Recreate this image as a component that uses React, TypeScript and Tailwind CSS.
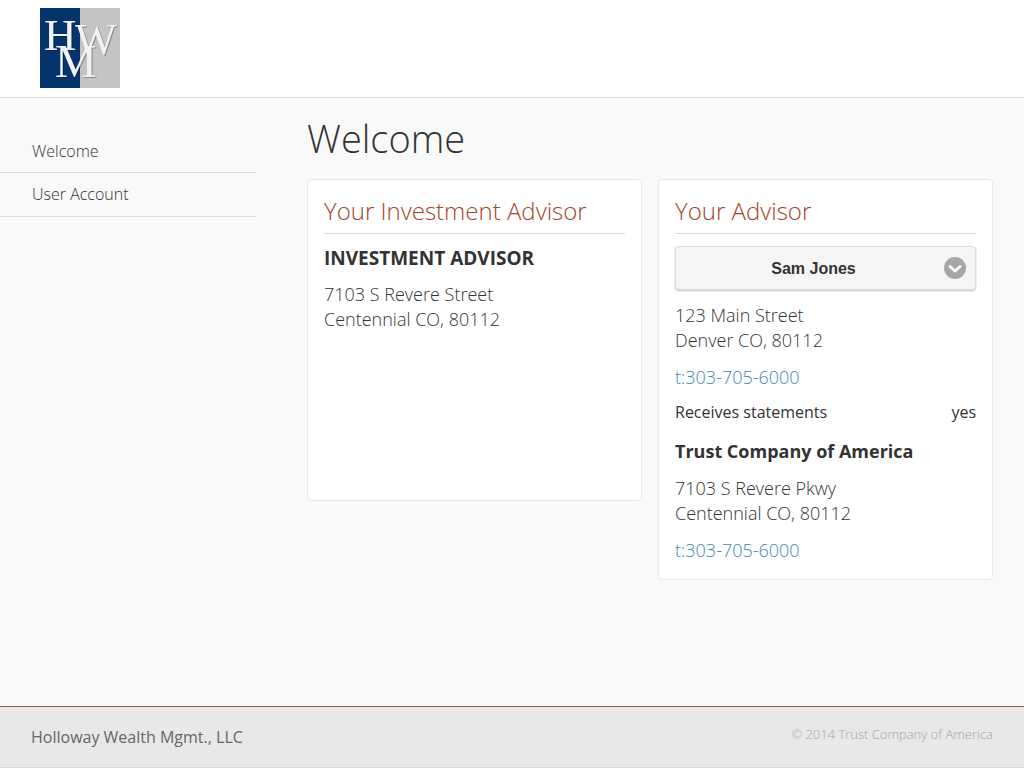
const OPEN_SANS = "font-['Open_Sans','Noto_Sans',sans-serif]";

function Logo() {
  return (
    <svg width="80" height="80" viewBox="0 0 80 80" className="block">
      <rect width="40" height="80" fill="#05336b" />
      <rect x="40" width="40" height="80" fill="#c3c4c6" />
      <g fontFamily="'Liberation Serif', serif" fill="#f1f2f4" className="drop-shadow-[1px_1px_0_rgba(0,0,0,0.3)]">
        <text x="35" y="46" fontSize="44">W</text>
        <text x="4" y="42" fontSize="45">H</text>
        <text x="15" y="69" fontSize="47">M</text>
      </g>
    </svg>
  );
}

function Chevron() {
  return (
    <svg width="22" height="22" viewBox="0 0 22 22" className="block">
      <circle cx="11" cy="11" r="11" fill="#a6a6a6" />
      <path d="M6 9.5l5 4.5 5-4.5" fill="none" stroke="#fff" strokeWidth="3" strokeLinecap="round" strokeLinejoin="round" />
    </svg>
  );
}

function CardTitle({ children }: { children: string }) {
  return (
    <h2 className="text-[24px] leading-[33px] font-light text-[#a5432a] border-b border-[#dcdcdc] pb-[6px]">
      {children}
    </h2>
  );
}

function Address({ lines, className }: { lines: string[]; className?: string }) {
  return (
    <p className={`text-[18px] leading-[25px] font-light text-[#333] ${className ?? ""}`}>
      {lines[0]}
      <br />
      {lines[1]}
    </p>
  );
}

export default function App() {
  return (
    <div className={`${OPEN_SANS} w-[1024px] h-[768px] flex flex-col bg-[#f9f9f9] overflow-hidden`}>
      <header className="h-[98px] shrink-0 bg-white border-b border-[#d9d9d9] pl-10 pt-2">
        <Logo />
      </header>

      <div className="flex-1 flex min-h-0">
        <nav className="w-[256px] shrink-0 pt-[32px] text-[16px] font-light text-[#333]">
          <div className="h-[43px] pl-8 flex items-center border-b border-[#dcdcdc]">Welcome</div>
          <div className="h-[44px] pl-8 pb-[2px] flex items-center border-b border-[#dcdcdc]">User Account</div>
        </nav>

        <main className="flex-1 pl-[51px] pr-[31px]">
          <h1 className="text-[38px] leading-[50px] font-light text-[#333] mt-[15px] mb-[16px]">Welcome</h1>
          <div className="flex items-start gap-4">
            <section className="w-[335px] h-[322px] bg-white border border-[#e8e8e8] rounded-[4px] px-4 pt-[14px]">
              <CardTitle>Your Investment Advisor</CardTitle>
              <h3 className="text-[19px] leading-[25px] font-bold text-[#333] mt-[12px]">INVESTMENT ADVISOR</h3>
              <Address className="mt-[11px]" lines={["7103 S Revere Street", "Centennial CO, 80112"]} />
            </section>

            <section className="w-[335px] h-[401px] bg-white border border-[#e8e8e8] rounded-[4px] px-4 pt-[14px]">
              <CardTitle>Your Advisor</CardTitle>
              <button className="relative mt-3 w-full h-[44px] pr-6 pt-[2px] bg-[#f5f5f5] border border-[#dcdcdc] rounded-[4px] shadow-[0_1px_2px_rgba(0,0,0,0.25)] font-['Liberation_Sans',sans-serif] font-bold text-[16px] text-[#333]">
                Sam Jones
                <span className="absolute right-[9px] top-[10px]">
                  <Chevron />
                </span>
              </button>
              <Address className="mt-[13px]" lines={["123 Main Street", "Denver CO, 80112"]} />
              <p className="text-[18px] leading-[25px] font-light text-[#3f88b3] mt-3">t:303-705-6000</p>
              <div className="flex justify-between text-[16px] leading-[20px] text-[#333] mt-[12px]">
                <span>Receives statements</span>
                <span>yes</span>
              </div>
              <h3 className="text-[18px] leading-[25px] font-bold text-[#333] mt-[17px]">Trust Company of America</h3>
              <Address className="mt-3" lines={["7103 S Revere Pkwy", "Centennial CO, 80112"]} />
              <p className="text-[18px] leading-[25px] font-light text-[#3f88b3] mt-3">t:303-705-6000</p>
            </section>
          </div>
        </main>
      </div>

      <footer className="h-[62px] shrink-0 bg-[#e8e8e8] border-t border-t-[#a5522f] border-b border-b-[#d8d8d8] flex justify-between pl-[31px] pr-[31px]">
        <span className="text-[16px] leading-[22px] text-[#666] mt-[19px]">Holloway Wealth Mgmt., LLC</span>
        <span className="text-[13px] leading-[16px] font-light text-[#a3a3a3] mt-[19px]">© 2014 Trust Company of America</span>
      </footer>
    </div>
  );
}
